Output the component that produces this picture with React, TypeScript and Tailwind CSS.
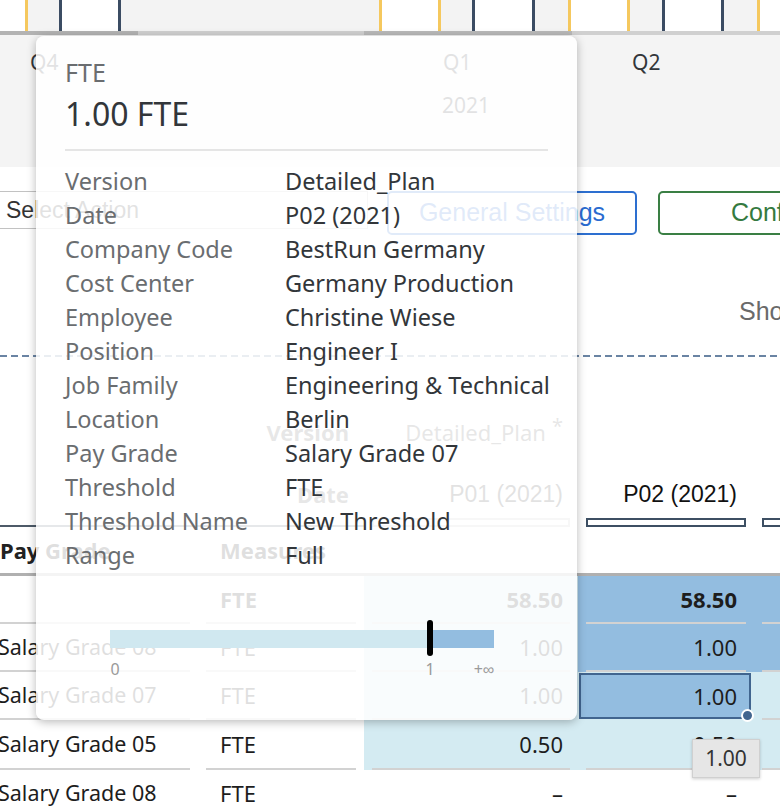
import React from "react";

const arial = "font-['Liberation_Sans',Arial,sans-serif]";

// timeline strip segments, left to right (x positions taken from the picture)
const timeline: string[] = [
  "w-[25px] bg-white",
  "w-[3px] bg-[#f5c85e]",
  "w-[31px] bg-[#f3f3f3]",
  "w-[3px] bg-[#3b4c63]",
  "w-[56px] bg-white",
  "w-[3px] bg-[#3b4c63]",
  "w-[258px] bg-[#f3f3f3]",
  "w-[3px] bg-[#f5c85e]",
  "w-[56px] bg-white",
  "w-[3px] bg-[#f5c85e]",
  "w-[31px] bg-[#f3f3f3]",
  "w-[3px] bg-[#3b4c63]",
  "w-[57px] bg-white",
  "w-[3px] bg-[#3b4c63]",
  "w-[33px] bg-[#f3f3f3]",
  "w-[3px] bg-[#f5c85e]",
  "w-[56px] bg-white",
  "w-[3px] bg-[#f5c85e]",
  "w-[32px] bg-[#f3f3f3]",
  "w-[3px] bg-[#3b4c63]",
  "w-[56px] bg-white",
  "w-[3px] bg-[#3b4c63]",
  "w-[33px] bg-[#f3f3f3]",
  "w-[3px] bg-[#f5c85e]",
  "flex-1 bg-white",
];

const details: [string, string][] = [
  ["Version", "Detailed_Plan"],
  ["Date", "P02 (2021)"],
  ["Company Code", "BestRun Germany"],
  ["Cost Center", "Germany Production"],
  ["Employee", "Christine Wiese"],
  ["Position", "Engineer I"],
  ["Job Family", "Engineering & Technical"],
  ["Location", "Berlin"],
  ["Pay Grade", "Salary Grade 07"],
  ["Threshold", "FTE"],
  ["Threshold Name", "New Threshold"],
  ["Range", "Full"],
];

interface Row {
  grade: string;
  measure: string;
  p01: string;
  p02: string;
  height: string;
  bold?: boolean;
  selected?: boolean;
  bg2: string;
  bg3: string;
  bg4: string;
}

const LIGHT = "bg-[#d4ebf2]";
const DARK = "bg-[#93bde0]";

const rows: Row[] = [
  { grade: "", measure: "FTE", p01: "58.50", p02: "58.50", height: "h-[48px]", bold: true, bg2: LIGHT, bg3: DARK, bg4: DARK },
  { grade: "Salary Grade 08", measure: "FTE", p01: "1.00", p02: "1.00", height: "h-[48px]", bg2: LIGHT, bg3: DARK, bg4: DARK },
  { grade: "Salary Grade 07", measure: "FTE", p01: "1.00", p02: "1.00", height: "h-[48px]", selected: true, bg2: LIGHT, bg3: LIGHT, bg4: LIGHT },
  { grade: "Salary Grade 05", measure: "FTE", p01: "0.50", p02: "0.50", height: "h-[50px]", bg2: LIGHT, bg3: LIGHT, bg4: LIGHT },
  { grade: "Salary Grade 08", measure: "FTE", p01: "–", p02: "–", height: "h-[48px]", bg2: "bg-white", bg3: "bg-white", bg4: "bg-white" },
];

const cols = "grid grid-cols-[206px_166px_214px_176px_34px] -ml-[8px] w-[796px]";

function Cell({ bg = "", className = "", children }: { bg?: string; className?: string; children?: React.ReactNode }) {
  return (
    <div className={`h-full ${bg}`}>
      <div className={`mx-[8px] h-full border-b-2 border-[#d2d2d2] flex items-center ${className}`}>{children}</div>
    </div>
  );
}

function Tooltip() {
  return (
    <div className="absolute left-[36px] top-[36px] w-[541px] h-[684px] rounded-[8px] bg-white/[0.86] shadow-[0_2px_10px_rgba(0,0,0,0.28)] px-[29px] pt-[24px]">
      <div className="text-[25px] leading-[25px] text-[#6a6d70]">FTE</div>
      <div className="mt-[13px] text-[32px] leading-[32px] text-[#32363a]">1.00 FTE</div>
      <div className="mt-[19px] h-[2px] bg-[#e5e5e5]" />
      <div className="mt-[13px]">
        {details.map(([label, value]) => (
          <div key={label} className="grid grid-cols-[220px_1fr] h-[34px] text-[23.5px] leading-[34px] whitespace-nowrap">
            <span className="text-[#6a6d70]">{label}</span>
            <span className="text-[#32363a]">{value}</span>
          </div>
        ))}
      </div>

      {/* range slider */}
      <div className="relative mt-[58px]">
        <div className="ml-[45px] w-[384px] h-[18px] flex">
          <div className="w-[320px] bg-[#d0e8f0]" />
          <div className="flex-1 bg-[#93bde0]" />
        </div>
        <div className="absolute left-[362px] -top-[10px] w-[6px] h-[36px] rounded-full bg-black" />
        <div className="relative h-[16px] mt-[13px] text-[16px] leading-[16px] text-[#9a9a9a]">
          <span className="absolute left-[50px] -translate-x-1/2">0</span>
          <span className="absolute left-[365px] -translate-x-1/2">1</span>
          <span className="absolute left-[419px] -translate-x-1/2">+∞</span>
        </div>
      </div>
    </div>
  );
}

export default function App() {
  return (
    <div className="relative w-[780px] h-[806px] overflow-hidden bg-white font-['Noto_Sans',sans-serif] text-[#32363a]">
      {/* timeline */}
      <div className="flex h-[31px]">
        {timeline.map((c, i) => (
          <div key={i} className={`shrink-0 ${c}`} />
        ))}
      </div>
      <div className="flex h-[4px]">
        <div className="w-[138px] bg-[#b3b3b3]" />
        <div className="w-[226px] bg-[#d0d0d0]" />
        <div className="w-[208px] bg-[#b9b9b9]" />
        <div className="flex-1 bg-[#d0d0d0]" />
      </div>
      <div className="h-[132px] bg-[#f4f4f4] pt-[17px] text-[21px] leading-[21px] text-[#32363a]">
        <div className="flex">
          <span className="w-[443px] shrink-0 pl-[30px]">Q4</span>
          <span className="w-[189px] shrink-0">Q1</span>
          <span>Q2</span>
        </div>
        <div className="mt-[22px] pl-[442px]">2021</div>
      </div>

      {/* toolbar */}
      <div className={`flex mt-[24px] h-[44px] ${arial}`}>
        <div className="shrink-0 -ml-[10px] w-[378px] h-[38px] border border-[#c2c2c2] flex items-center pl-[15px] text-[23px] text-[#333]">
          Select Action
        </div>
        <div className="shrink-0 ml-[19px] w-[250px] h-[44px] border-2 border-[#2d6fd0] rounded-[5px] flex items-center justify-center text-[25px] text-[#2a6bd0]">
          General Settings
        </div>
        <div className="shrink-0 ml-[21px] w-[250px] h-[44px] border-2 border-[#3a7f44] rounded-[5px] flex items-center pl-[71px] text-[25px] text-[#357a3f]">
          Confirm
        </div>
      </div>
      <div className={`mt-[64px] pl-[739px] text-[25px] leading-[25px] text-[#6a6a6a] whitespace-nowrap ${arial}`}>Show Details</div>
      <div className="mt-[31px] h-[2px] bg-[repeating-linear-gradient(90deg,#6a84a3_0px,#6a84a3_7px,transparent_7px,transparent_11px)]" />

      {/* table header */}
      <div className={`${cols} mt-[53px] h-[44px] items-center text-[22px] text-[#555]`}>
        <div />
        <div className="pr-[15px] text-right font-bold">Version</div>
        <div className="pr-[15px] text-right whitespace-nowrap">
          Detailed_Plan<span className="relative -top-[8px] ml-[6px] text-[20px]">*</span>
        </div>
        <div />
        <div />
      </div>
      <div className={`${cols} mt-[18px] h-[44px] items-center`}>
        <div />
        <div className="pr-[15px] text-right text-[22px] font-bold text-[#555]">Date</div>
        <div className={`pr-[15px] text-right text-[23px] text-[#333] ${arial}`}>P01 (2021)</div>
        <div className={`pr-[17px] text-right text-[23px] text-[#111] ${arial}`}>P02 (2021)</div>
        <div />
      </div>
      <div className={`${cols} mt-[1px] h-[10px]`}>
        <div className="col-span-2 ml-[8px] flex items-end">
          <div className="w-full h-[2px] bg-[#4d5a68]" />
        </div>
        <div className="mx-[8px] mt-[1px] h-[9px] border-2 border-[#c6c6c6] bg-white" />
        <div className="mx-[8px] mt-[1px] h-[9px] border-2 border-[#3d4f63] bg-white" />
        <div className="ml-[8px] mt-[1px] h-[9px] border-2 border-[#3d4f63] bg-white" />
      </div>
      <div className={`${cols} h-[49px] items-center border-b-[3px] border-[#b0b0b0] text-[22px] font-bold text-[#222]`}>
        <div className="pl-[8px] whitespace-nowrap">Pay Grade</div>
        <div className="pl-[22px]">Measures</div>
        <div />
        <div />
        <div />
      </div>

      {/* data rows */}
      {rows.map((r, i) => (
        <div key={i} className={`${cols} ${r.height} text-[22px] text-[#1d1d1d] ${r.bold ? "font-bold" : ""}`}>
          <Cell className="whitespace-nowrap">
            <span className="-ml-[2px] text-[21.5px]">{r.grade}</span>
          </Cell>
          <Cell className="pl-[14px]">{r.measure}</Cell>
          <Cell bg={r.bg2} className="justify-end pr-[7px]">
            {r.p01}
          </Cell>
          {r.selected ? (
            <div className={`relative h-full ${r.bg3}`}>
              <div className="absolute left-[1px] top-[1px] w-[172px] h-[46px] border-2 border-[#41658f] bg-[#93bde0]" />
              <div className="relative mx-[8px] h-full flex items-center justify-end pr-[9px]">{r.p02}</div>
              <div className="absolute left-[163px] top-[37px] w-[13px] h-[13px] rounded-full bg-[#41658f] border-2 border-white" />
            </div>
          ) : (
            <Cell bg={r.bg3} className="justify-end pr-[9px]">
              {r.p02}
            </Cell>
          )}
          <div className={`h-full ${r.bg4}`}>
            <div className="ml-[8px] h-full border-b-2 border-[#d2d2d2]" />
          </div>
        </div>
      ))}

      {/* value hint */}
      <div className="absolute left-[692px] top-[739px] w-[68px] h-[39px] bg-[#e6e6e6] border border-[#d0d0d0] shadow-[0_1px_3px_rgba(0,0,0,0.2)] flex items-center justify-center text-[21px] text-[#333]">
        1.00
      </div>

      <Tooltip />
    </div>
  );
}
